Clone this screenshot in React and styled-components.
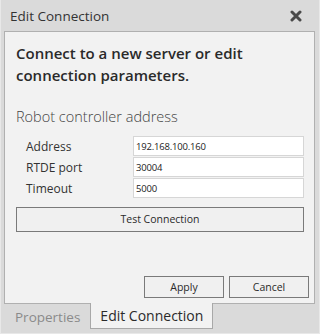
import React from "react";
import styled, { createGlobalStyle } from "styled-components";

const Global = createGlobalStyle`
  html, body { margin: 0; padding: 0; background: #dadada; }
  * { box-sizing: border-box; }
`;

const Window = styled.div`
  width: 320px;
  height: 334px;
  display: flex;
  flex-direction: column;
  padding: 0 5px 5px 4px;
  background: #dadada;
  font-family: "Open Sans", "Noto Sans", sans-serif;
  color: #262626;
  box-shadow: inset 1px 0 #e8e8e8, inset -1px 0 #e8e8e8, inset 0 -1px #e8e8e8;
`;

const TitleBar = styled.div`
  height: 31px;
  flex: none;
  display: flex;
  align-items: center;
  justify-content: space-between;
  padding: 0 13px 0 6px;
  font-size: 13.5px;
  color: #333;
`;

const CloseIcon = () => (
  <svg width="12" height="12" viewBox="0 0 12 12">
    <path d="M2 2 L10 10 M10 2 L2 10" stroke="#4a4a4a" strokeWidth="3" strokeLinecap="round" />
  </svg>
);

const Panel = styled.div`
  height: 273px;
  flex: none;
  display: flex;
  flex-direction: column;
  background: #f2f2f2;
  border: 1px solid #b0b0b0;
  padding: 10px 10px 5px 11px;
`;

const Heading = styled.div`
  font-size: 15px;
  font-weight: 600;
  line-height: 22px;
  color: #2a2a2a;
`;

const SectionTitle = styled.div`
  margin-top: 20px;
  font-size: 14.5px;
  font-weight: 300;
  line-height: 22px;
  color: #444;
`;

const Fields = styled.div`
  margin-top: 8px;
  display: grid;
  grid-template-columns: 107px 1fr;
  row-gap: 1px;
  padding-left: 10px;
`;

const Label = styled.div`
  height: 20px;
  display: flex;
  align-items: center;
  font-size: 12px;
  color: #333;
`;

const Input = styled.input`
  height: 20px;
  width: 100%;
  margin: 0;
  border: 1px solid #d6d6d6;
  background: #fff;
  padding: 0 2px;
  font-family: inherit;
  font-size: 9.5px;
  letter-spacing: -0.2px;
  color: #222;
  outline: none;
`;

const Button = styled.button`
  height: ${(p) => p.$h}px;
  width: ${(p) => (p.$w ? `${p.$w}px` : "100%")};
  margin: 0;
  padding: 0;
  border: 1px solid #7a7a7a;
  background: #f0f0f0;
  font-family: inherit;
  font-size: 10.5px;
  color: #2a2a2a;
`;

const TestRow = styled.div`
  margin-top: 8px;
`;

const Spacer = styled.div`
  flex: 1;
`;

const Actions = styled.div`
  display: flex;
  justify-content: flex-end;
  gap: 5px;
  margin-right: -5px;
`;

const TabStrip = styled.div`
  height: 25px;
  flex: none;
  display: flex;
  align-items: stretch;
`;

const Tab = styled.div`
  display: flex;
  align-items: center;
  font-size: ${(p) => (p.$active ? "14px" : "13.5px")};
  padding: ${(p) => (p.$active ? "0 9px 1px 9px" : "0 10px 0 11px")};
  color: ${(p) => (p.$active ? "#2a2a2a" : "#8a8a8a")};
  background: ${(p) => (p.$active ? "#f2f2f2" : "transparent")};
  border: ${(p) => (p.$active ? "1px solid #a8a8a8" : "none")};
  border-top: none;
  margin-top: ${(p) => (p.$active ? "-1px" : "0")};
  height: ${(p) => (p.$active ? "26px" : "25px")};
`;

export default function App() {
  return (
    <>
      <Global />
      <Window>
        <TitleBar>
          <span>Edit Connection</span>
          <CloseIcon />
        </TitleBar>
        <Panel>
          <Heading>
            Connect to a new server or edit
            <br />
            connection parameters.
          </Heading>
          <SectionTitle>Robot controller address</SectionTitle>
          <Fields>
            <Label>Address</Label>
            <Input defaultValue="192.168.100.160" />
            <Label>RTDE port</Label>
            <Input defaultValue="30004" />
            <Label>Timeout</Label>
            <Input defaultValue="5000" />
          </Fields>
          <TestRow>
            <Button $h={25}>Test Connection</Button>
          </TestRow>
          <Spacer />
          <Actions>
            <Button $h={22} $w={80}>Apply</Button>
            <Button $h={22} $w={80}>Cancel</Button>
          </Actions>
        </Panel>
        <TabStrip>
          <Tab>Properties</Tab>
          <Tab $active>Edit Connection</Tab>
        </TabStrip>
      </Window>
    </>
  );
}
